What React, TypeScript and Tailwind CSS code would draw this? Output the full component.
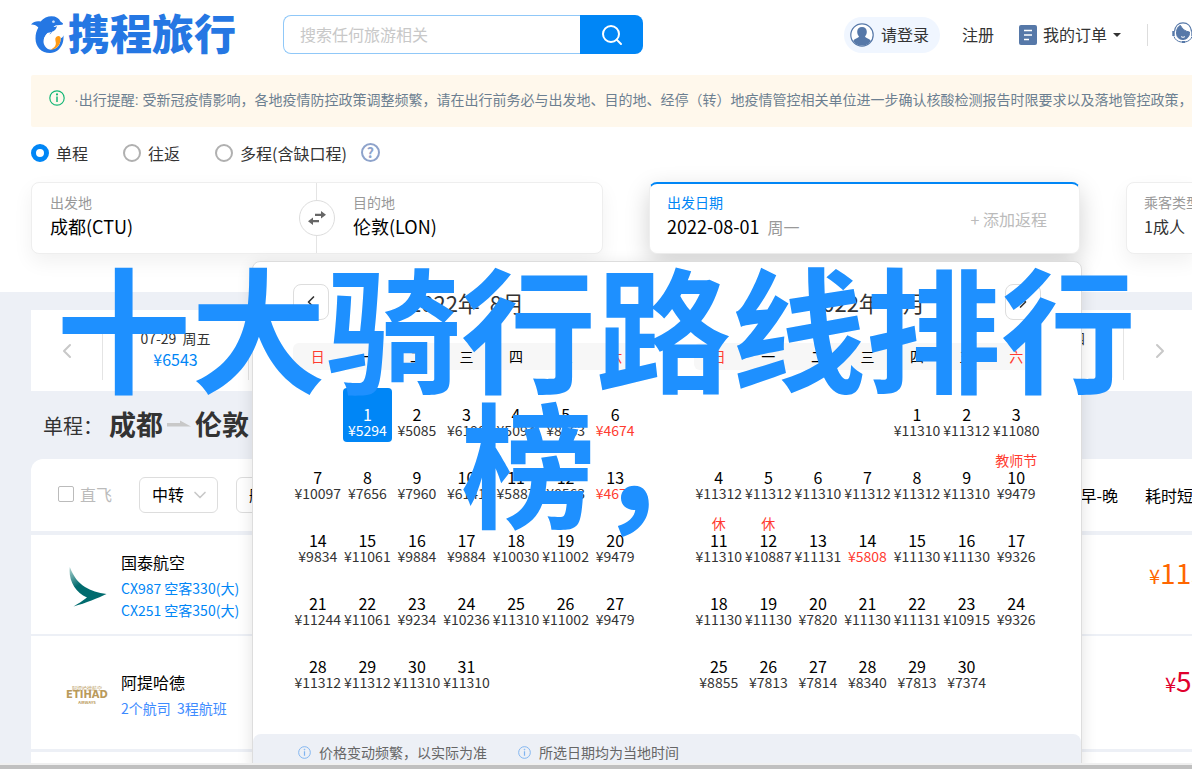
import React from 'react';
import { ChevronDown, ChevronLeft, ChevronRight, Search } from 'lucide-react';

type Day = { day: number; price: string; low?: boolean; tag?: string; selected?: boolean };

const weekdays = ['日', '一', '二', '三', '四', '五', '六'];

const toDays = (prices: number[]): Day[] => prices.map((price, i) => ({ day: i + 1, price: `¥${price}` }));

const august = toDays([
    5294, 5085, 6198, 5094, 8563, 4674, 10097, 7656, 7960, 6141, 5887, 8563, 4674, 9834, 11061, 9884,
    9884, 10030, 11002, 9479, 11244, 11061, 9234, 10236, 11310, 11002, 9479, 11312, 11312, 11310, 11310
]).map((d) => ({ ...d, selected: d.day === 1, low: d.day === 6 || d.day === 13 }));

const september = toDays([
    11310, 11312, 11080, 11312, 11312, 11310, 11312, 11312, 11310, 9479, 11310, 10887, 11131, 5808, 11130,
    11130, 9326, 11130, 11130, 7820, 11130, 11131, 10915, 9326, 8855, 7813, 7814, 8340, 7813, 7374
]).map((d) => ({
    ...d,
    low: d.day === 14,
    tag: d.day === 10 ? '教师节' : d.day === 11 || d.day === 12 ? '休' : undefined
}));

// Split a month into weeks, padding the days before the 1st
const toWeeks = (offset: number, days: Day[]) => {
    const cells: (Day | null)[] = [...Array(offset).fill(null), ...days];
    const weeks: (Day | null)[][] = [];
    for (let i = 0; i < cells.length; i += 7) {
        weeks.push(cells.slice(i, i + 7));
    }
    return weeks;
};

const DolphinLogo = () => (
    <svg viewBox="0 0 34 38" className="w-[34px] h-[38px] shrink-0" aria-hidden="true">
        <path
            d="M0 8.500C2.500 5.500 6 4.800 9.500 5.500 12.500 2 16.500.2 20.500.2c4.500 0 7.500 2 9 5.200l2 1.600c.9.800.6 1.700-.5 1.800l-5 .4c-1.500 0-2.500.6-3.500 1.800 1.500.2 2.500-.1 3.500-1-.5 3-2.500 4.800-5 5.800-.5 1.200-1.200 2-2.300 2.800-.2-1-.7-1.600-1.500-1.900-3.700 3-5 7-3.700 10.800 1.500 4 5.500 6.300 9.800 5.300 4.200-1 6.200-5.500 6.500-10.500 1.500-.5 2.300-1.500 2.600-3 .3 2.500.1 5.500-1 8.500C29 33.500 25 37 19 37 10.500 37 4.500 31 4.500 22.500c0-4.500 1-7.700 2.800-11C5.500 9.300 3 8.300 0 8.500z"
            fill="#2577e3"
        />
        <path d="M16.500 17c-4 4-5.200 9-2.500 13.200 1.800 2.800 5 4 8 3.400-4-.6-6.500-4-6.500-8 0-3.300 2-6.500 5-9.600z" fill="#fff" />
        <path d="M25.500 20.800c2-1.500 4.300-.6 4.200 2C29.500 28.500 26 33.500 19.500 33.800c3.500-1.800 5.700-4 5.300-7-.1-2-1.300-4.300.7-6z" fill="#ff9a14" />
        <circle cx="22.500" cy="5.800" r="1.200" fill="#fff" />
        <circle cx="22.800" cy="5.900" r=".5" fill="#2577e3" />
    </svg>
);

const InfoIcon = ({ className }: { className: string }) => (
    <svg viewBox="0 0 16 16" className={className} fill="none" stroke="currentColor" strokeWidth="1.200" aria-hidden="true">
        <circle cx="8" cy="8" r="7.200" />
        <path d="M8 6.500V12" strokeWidth="1.500" />
        <circle cx="8" cy="4.400" r=".5" fill="currentColor" />
    </svg>
);

const Header = () => (
    <header className="flex items-center h-[69px]">
        <a href="#" className="flex items-center gap-[3px] w-[252px] pb-[6px] text-[#2577e3] text-[42px] leading-10 font-black whitespace-nowrap">
            <span className="pt-[6px]"><DolphinLogo /></span>
            携程旅行
        </a>
        <form className="flex w-[360px] h-[39px] shrink-0">
            <input
                type="text"
                aria-label="搜索"
                placeholder="搜索任何旅游相关"
                className="flex-1 min-w-0 px-4 pb-[2px] border border-r-0 border-[#90c8f8] rounded-l-lg text-base placeholder:text-[#c8c8c8] outline-none"
            />
            <button type="button" aria-label="搜索" className="w-[63px] rounded-r-lg bg-[#0086f6] text-white flex items-center justify-center">
                <Search className="w-6 h-6" strokeWidth={2} />
            </button>
        </form>
        <nav className="flex items-center shrink-0 ml-[201px] text-base text-[#333] whitespace-nowrap">
            <a href="#" className="flex items-center gap-[7px] h-9 px-[6px] pr-[11px] rounded-full bg-[#f0f6ff]">
                <svg viewBox="0 0 24 24" className="w-6 h-6" aria-hidden="true">
                    <circle cx="12" cy="12" r="11.200" fill="#fff" stroke="#5678a8" strokeWidth="1.200" />
                    <path d="M12 4c2.900 0 4.800 1.900 4.800 4.800 0 2-.8 3.500-1.800 4.600.3 1.500 5.200 2 5.700 4.600A10 10 0 0 1 12 22.500 10 10 0 0 1 3.300 18c.5-2.600 5.400-3.100 5.700-4.600-1-1.100-1.800-2.600-1.800-4.600C7.200 5.900 9.100 4 12 4z" fill="#5678a8" />
                </svg>
                <span className="pb-[2px]">请登录</span>
            </a>
            <a href="#" className="ml-[22px] pb-[2px]">注册</a>
            <a href="#" className="flex items-center gap-[6px] ml-[25px]">
                <svg viewBox="0 0 18 20" className="w-[18px] h-5" aria-hidden="true">
                    <rect width="18" height="20" rx="2" fill="#5678a8" />
                    <path d="M5 5.500h8M5 10h8M5 14.500h5" stroke="#fff" strokeWidth="1.500" />
                </svg>
                <span className="pb-[2px]">我的订单</span>
                <svg viewBox="0 0 8 4" className="w-2 h-1" aria-hidden="true">
                    <path d="M0 0h8L4 4z" fill="#333" />
                </svg>
            </a>
            <span className="w-px h-[22px] ml-[26px] bg-[#ddd]" />
            <a href="#" aria-label="客服" className="ml-6 pb-1">
                <svg viewBox="0 0 22 22" className="w-[22px] h-[22px]" fill="none" stroke="#5678a8" aria-hidden="true">
                    <path d="M2.500 9.500C3 4 6.500.8 11 .8S19 4 19.500 9.500" strokeWidth="1.200" />
                    <path d="M4.500 11C4.500 6.500 6.500 4 8.500 3.500c1.500 3.500 5 6 9 6.500.3 4.500-2.500 7.500-6.500 7.500S4.500 15 4.500 11z" fill="#5678a8" />
                    <path d="M1.500 9v5M20.500 9v5" strokeWidth="2.400" />
                    <path d="M2 14.500c1 3 3.500 5 7 5.500M20 14.500c-1 3-3.500 5-7 5.500" />
                    <path d="M9.500 20h3.500" strokeWidth="2" />
                    <path d="M9 14.500c1 1 3 1 4 0" stroke="#fff" />
                </svg>
            </a>
        </nav>
    </header>
);

const TripRadio = ({ label, checked }: { label: string; checked?: boolean }) => (
    <label className="flex items-center gap-[7px]">
        <input
            type="radio"
            name="trip"
            defaultChecked={checked}
            className="appearance-none w-[18px] h-[18px] rounded-full bg-white border-2 border-[#b0b0b0] checked:border-[5px] checked:border-[#0086f6]"
        />
        {label}
    </label>
);

const Month = ({ title, weeks }: { title: string; weeks: (Day | null)[][] }) => (
    <table className="w-[347px] table-fixed border-collapse text-center">
        <caption className="h-9 mb-[23px] text-[22px] leading-9 text-[#333] whitespace-pre">{title}</caption>
        <thead>
            <tr>
                {weekdays.map((name, i) => (
                    <th key={name} className="p-0 pb-[9px] font-normal text-sm">
                        <div
                            className={`h-[27px] leading-[27px] bg-[#f7f7f7] ${i === 0 ? 'rounded-l-md' : ''} ${i === 6 ? 'rounded-r-md' : ''} ${i % 6 === 0 ? 'text-[#ff3b30]' : 'text-black'}`}
                        >
                            {name}
                        </div>
                    </th>
                ))}
            </tr>
        </thead>
        <tbody>
            {weeks.map((week, w) => (
                <tr key={w}>
                    {week.map((d, i) => (
                        <td key={i} className="p-0 pt-[9px]">
                            {d && (
                                <button
                                    type="button"
                                    className={`flex flex-col items-center w-full h-[54px] pt-[2px] rounded whitespace-nowrap ${d.selected ? 'bg-[#0086f6] text-white' : 'text-black'}`}
                                >
                                    <span className="h-4 text-sm leading-[14px] text-[#ff3b30]">{d.tag}</span>
                                    <span className="text-base leading-4">{d.day}</span>
                                    <span className={`text-sm leading-4 ${d.low ? 'text-[#ff3b30]' : d.selected ? 'text-white' : 'text-[#333]'}`}>
                                        {d.price}
                                    </span>
                                </button>
                            )}
                        </td>
                    ))}
                </tr>
            ))}
        </tbody>
    </table>
);

const CalendarPopover = () => (
    <div className="absolute top-[79px] -right-[2px] z-20 w-[830px] bg-white border border-[#ddd] rounded-lg shadow-[0_4px_16px_rgba(0,0,0,0.12)]">
        <div className="relative flex justify-between px-10 pt-[22px] pb-10">
            <Month title="2022年  8月" weeks={toWeeks(1, august)} />
            <Month title="2022年  9月" weeks={toWeeks(4, september)} />
            <div className="absolute inset-x-10 top-[22px] flex justify-between text-[#333]">
                <button type="button" aria-label="上个月" className="w-9 h-9 border border-[#ddd] rounded-lg flex items-center justify-center">
                    <ChevronLeft className="w-5 h-5" />
                </button>
                <button type="button" aria-label="下个月" className="w-9 h-9 border border-[#ddd] rounded-lg flex items-center justify-center">
                    <ChevronRight className="w-5 h-5" />
                </button>
            </div>
        </div>
        <div className="flex items-center gap-[31px] h-9 px-[45px] rounded-t-lg bg-[#edf0f6] text-sm text-[#666]">
            <span className="flex items-center gap-2">
                <InfoIcon className="w-[13px] h-[13px] text-[#7fb4f0]" />
                价格变动频繁，以实际为准
            </span>
            <span className="flex items-center gap-2">
                <InfoIcon className="w-[13px] h-[13px] text-[#7fb4f0]" />
                所选日期均为当地时间
            </span>
        </div>
    </div>
);

const SearchForm = () => (
    <div className="flex gap-[46px] h-[72px] whitespace-nowrap">
        <div className="relative flex w-[572px] shrink-0 border border-[#eee] rounded-lg bg-white shadow-[0_8px_20px_rgba(0,0,0,0.06)]">
            <div className="w-1/2 pl-[18px] pt-[9px] border-r border-[#e4e4e4]">
                <div className="text-sm leading-5 text-[#999]">出发地</div>
                <div className="text-lg leading-7 text-black">成都(CTU)</div>
            </div>
            <div className="w-1/2 pl-9 pt-[9px]">
                <div className="text-sm leading-5 text-[#999]">目的地</div>
                <div className="text-lg leading-7 text-black">伦敦(LON)</div>
            </div>
            <button
                type="button"
                aria-label="交换"
                className="absolute left-1/2 top-1/2 -translate-x-1/2 -translate-y-1/2 w-9 h-9 rounded-full border border-[#ddd] bg-white flex items-center justify-center"
            >
                <svg viewBox="0 0 20 16" className="w-5 h-4" fill="#666" aria-hidden="true">
                    <path d="M8 3.700h6V1l5 3.800-5 3.800V5.900H8zM12 10.100H6V7.400L1 11.200 6 15v-2.700h6z" />
                </svg>
            </button>
        </div>
        <div className="relative w-[431px] shrink-0">
            <div className="flex justify-between h-full pl-[17px] pr-8 pt-2 border border-[#eee] border-t-2 border-t-[#0086f6] rounded-lg bg-white shadow-[0_8px_24px_rgba(0,0,0,0.18)]">
                <div>
                    <div className="text-sm leading-5 text-[#0086f6]">出发日期</div>
                    <div className="text-lg leading-7 text-black">
                        2022-08-01<span className="ml-2 text-base text-[#999]">周一</span>
                    </div>
                </div>
                <button type="button" className="pb-2 text-base text-[#bbb]">+ 添加返程</button>
            </div>
            <CalendarPopover />
        </div>
        <div className="flex-1 min-w-0 pl-[17px] pt-[9px] border border-[#eee] rounded-l-lg bg-white shadow-[0_8px_20px_rgba(0,0,0,0.06)]">
            <div className="text-sm leading-5 text-[#999]">乘客类型</div>
            <div className="text-base leading-7 text-[#333]">1成人</div>
        </div>
    </div>
);

const DateStrip = () => (
    <div className="flex items-center h-[81px] bg-white text-[#c8c8c8] whitespace-nowrap">
        <button type="button" aria-label="前一天" className="w-[71px] flex justify-center">
            <ChevronLeft className="w-6 h-6" />
        </button>
        <div className="flex flex-1 justify-between h-[58px] border-x border-[#e4e4e4]">
            <button type="button" className="w-[146px] pb-1 border-r border-[#e4e4e4]">
                <div className="text-sm leading-5 text-[#333]">07-29&nbsp; 周五</div>
                <div className="text-base leading-[22px] text-[#0086f6]">¥6543</div>
            </button>
            <button type="button" className="w-[146px] pb-[26px]">
                <div className="text-sm leading-5 text-[#333]">08-04&nbsp; 周四</div>
            </button>
        </div>
        <button type="button" aria-label="后一天" className="w-[71px] flex justify-center">
            <ChevronRight className="w-6 h-6" />
        </button>
    </div>
);

const FilterSelect = ({ label, className }: { label: string; className: string }) => (
    <div className={`relative h-9 ${className}`}>
        <select aria-label={label} className="appearance-none w-full h-full pl-3 pb-[2px] border border-[#ddd] rounded-md bg-white text-base text-black">
            <option>{label}</option>
        </select>
        <ChevronDown className="absolute right-2 top-2 w-5 h-5 text-[#c8c8c8] pointer-events-none" />
    </div>
);

const Filters = () => (
    <div className="flex items-center h-[72px] pl-[27px] pr-[2px] bg-white rounded-tl-xl text-base whitespace-nowrap">
        <label className="flex items-center gap-[6px] mr-[27px] pb-[2px] text-[#bbb]">
            <input type="checkbox" className="appearance-none w-4 h-4 border border-[#bbb] rounded-xs" />
            直飞
        </label>
        <FilterSelect label="中转" className="w-[79px] mr-[18px]" />
        <FilterSelect label="航空公司" className="w-[115px]" />
        <div className="flex gap-[27px] ml-auto text-black">
            <button type="button">起飞早-晚</button>
            <button type="button">耗时短</button>
        </div>
    </div>
);

const CathayLogo = () => (
    <svg viewBox="0 0 38 40" className="w-[38px] h-10" aria-hidden="true">
        <defs>
            <linearGradient id="wing" x1="0" y1="0" x2="0.300" y2="0.500">
                <stop offset="0" stopColor="#b4d6d3" />
                <stop offset="0.900" stopColor="#006b6e" />
            </linearGradient>
        </defs>
        <path d="M.8 0C4.500 9.500 9 15.500 16 20c6 3.700 13 6.200 21.500 7C29 31 17 36 4.500 39.500c4-2.500 9-5.500 13.500-9C6 25.500-.8 13 .8 0z" fill="url(#wing)" />
    </svg>
);

const EtihadLogo = () => (
    <div className="w-[44px] pt-1 text-center font-bold text-[#b99a5b] whitespace-nowrap">
        <div className="text-[5px] leading-[7px] font-normal">阿提哈德航空</div>
        <div className="text-[10px] leading-[8px] font-['DejaVu_Sans',sans-serif]">ETIHAD</div>
        <div className="text-[4px] leading-[6px]">AIRWAYS</div>
    </div>
);

export default function App() {
    return (
        <div className="flex flex-col h-screen overflow-hidden bg-white font-['Noto_Sans_CJK_SC','Noto_Sans',sans-serif]">
            <main className="relative flex-1 min-h-0 overflow-hidden">
                <div className="flex flex-col min-w-[1195px] min-h-full">
                    <div className="pl-[31px] pb-[38px]">
                        <Header />
                        <div className="flex gap-[9px] h-[52px] mt-[6px] pl-[18px] rounded-l-xs overflow-hidden bg-[#fff8ec] text-sm leading-[50px] text-[#6c7f91] whitespace-nowrap">
                            <InfoIcon className="w-4 h-4 mt-[15px] shrink-0 text-[#16b777]" />
                            <p className="font-['Liberation_Sans','Noto_Sans_CJK_SC',sans-serif]">·出行提醒: 受新冠疫情影响，各地疫情防控政策调整频繁，请在出行前务必与出发地、目的地、经停（转）地疫情管控相关单位进一步确认核酸检测报告时限要求以及落地管控政策，合理安排</p>
                        </div>
                        <div className="flex items-center gap-[35px] h-[51px] mb-1 text-base text-[#333]">
                            <TripRadio label="单程" checked />
                            <TripRadio label="往返" />
                            <div className="flex items-center gap-[14px]">
                                <TripRadio label="多程(含缺口程)" />
                                <button type="button" className="w-[19px] h-[19px] border-2 border-[#8ea3cb] rounded-full text-sm leading-[15px] font-bold text-[#8ea3cb]">
                                    ?
                                </button>
                            </div>
                        </div>
                        <SearchForm />
                    </div>
                    <section className="flex-1 pl-[31px] pt-[18px] bg-[#edf0f6]">
                        <DateStrip />
                        <h2 className="flex items-center h-[68px] pl-3 pb-[2px] text-[27px] font-bold text-[#333] whitespace-nowrap">
                            <span className="w-[66px] pt-1 text-xl font-normal">单程：</span>
                            成都
                            <svg viewBox="0 0 24 8" className="w-6 h-2 mx-1" fill="#c8c8c8" aria-hidden="true">
                                <path d="M0 3h13V.5L24 6.500H0z" />
                            </svg>
                            伦敦
                        </h2>
                        <Filters />
                        <div className="flex items-center h-[99px] mt-1 pl-[38px] bg-white whitespace-nowrap">
                            <div className="w-[52px] pt-1"><CathayLogo /></div>
                            <div className="pt-[2px]">
                                <div className="mb-[3px] text-base text-black">国泰航空</div>
                                <div className="text-sm leading-[22px] text-[#0086f6]">CX987 空客330(大)</div>
                                <div className="text-sm leading-[22px] text-[#0086f6]">CX251 空客350(大)</div>
                            </div>
                            <div className="w-[46px] ml-auto mb-6 text-[28px] leading-8 text-[#ff6600]">
                                <span className="text-xl">¥</span>11310
                            </div>
                        </div>
                        <div className="flex items-center h-[113px] mt-[2px] pl-[34px] bg-white whitespace-nowrap">
                            <div className="w-14"><EtihadLogo /></div>
                            <div className="pt-1">
                                <div className="mb-[3px] text-base text-black">阿提哈德</div>
                                <div className="text-sm leading-[22px] text-[#3d8bff]">2个航司&nbsp; 3程航班</div>
                            </div>
                            <div className="w-[30px] ml-auto mb-6 text-[28px] leading-8 text-[#e0002d]">
                                <span className="text-xl">¥</span>5294
                            </div>
                        </div>
                        <div className="h-[11px] mt-[3px] bg-white" />
                    </section>
                </div>
                <p className="absolute -inset-x-4 top-[257px] z-30 text-center text-[135px] leading-[135px] font-bold text-[#1e90ff] whitespace-nowrap pointer-events-none">
                    十大骑行路线排行<br />榜，
                </p>
            </main>
            <footer className="h-[6px] shrink-0 border-t-2 border-[#f0f0f0] bg-[#c0c0c0]" />
        </div>
    );
}
